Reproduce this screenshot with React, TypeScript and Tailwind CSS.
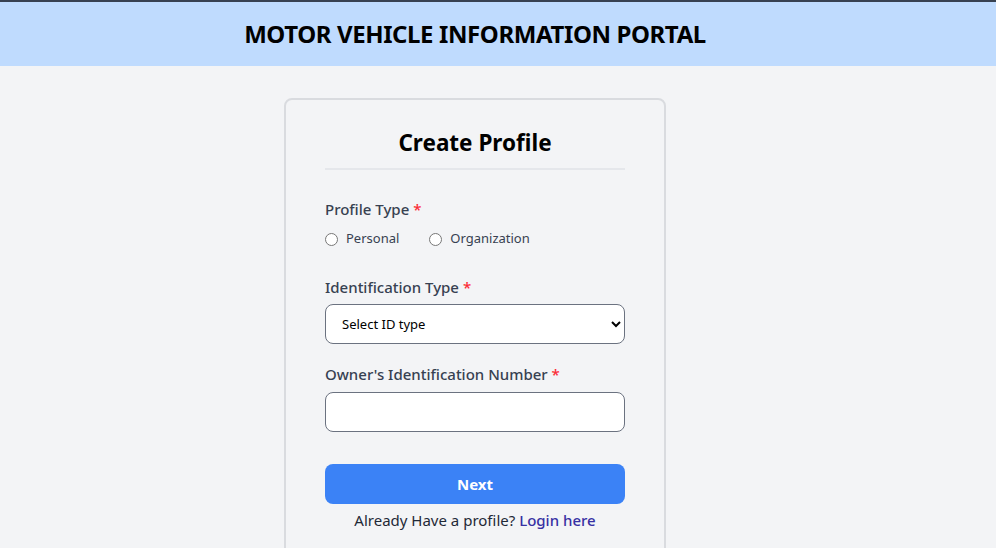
import { useState } from 'react';

export default function App() {
  const [profileType, setProfileType] = useState('');
  const [idType, setIdType] = useState('');
  const [idNumber, setIdNumber] = useState('');

  return (
    <div className="min-h-screen bg-[#f3f4f6] font-['Noto_Sans',sans-serif] text-gray-900">
      {/* Header */}
      <header className="border-t-2 border-[#374151] bg-[#bfdbfe]">
        <div className="flex h-[64px] items-center justify-center pr-[46px]">
          <h1 className="text-[24px] font-bold tracking-[-0.4px] text-black">MOTOR VEHICLE INFORMATION PORTAL</h1>
        </div>
      </header>

      <main className="flex justify-center pr-[46px] pt-[32px]">
        <div className="w-[382px] rounded-lg border-2 border-[#d9dbdf] bg-[#f3f4f6] px-[39px] pt-[26px] pb-6">
          <h2 className="text-center text-[22.5px] font-bold text-black">Create Profile</h2>
          <div className="mt-[8px] border-t-2 border-[#e5e7eb]" />

          <form className="mt-[28px]" onSubmit={(e) => e.preventDefault()}>
            {/* Profile Type */}
            <div>
              <label className="block text-[15px] font-medium text-[#374151]">
                Profile Type <span className="text-red-500">*</span>
              </label>
              <div className="mt-[9px] flex items-center gap-[30px] text-[13px] text-[#374151]">
                <label className="flex items-center gap-[8px]">
                  <input
                    type="radio"
                    name="profileType"
                    value="personal"
                    checked={profileType === 'personal'}
                    onChange={() => setProfileType('personal')}
                    className="h-[13px] w-[13px]"
                  />
                  Personal
                </label>
                <label className="flex items-center gap-[8px]">
                  <input
                    type="radio"
                    name="profileType"
                    value="organization"
                    checked={profileType === 'organization'}
                    onChange={() => setProfileType('organization')}
                    className="h-[13px] w-[13px]"
                  />
                  Organization
                </label>
              </div>
            </div>

            {/* Identification Type */}
            <div className="mt-[27px]">
              <label className="block text-[15px] font-medium text-[#374151]">
                Identification Type <span className="text-red-500">*</span>
              </label>
              <select
                value={idType}
                onChange={(e) => setIdType(e.target.value)}
                className="mt-[6px] h-[40px] w-full rounded-lg border border-[#6b7280] bg-white pl-3 pr-2 text-[13px] text-black"
              >
                <option value="">Select ID type</option>
                <option value="nin">National ID</option>
                <option value="passport">Passport</option>
                <option value="cac">CAC Number</option>
              </select>
            </div>

            {/* Identification Number */}
            <div className="mt-[19px]">
              <label className="block text-[15px] font-medium text-[#374151]">
                Owner's Identification Number <span className="text-red-500">*</span>
              </label>
              <input
                type="text"
                value={idNumber}
                onChange={(e) => setIdNumber(e.target.value)}
                className="mt-[6px] h-[40px] w-full rounded-lg border border-[#6b7280] bg-white px-3 text-[14px]"
              />
            </div>

            <button
              type="submit"
              className="mt-[32px] h-[40px] w-full rounded-lg bg-[#3b82f6] text-[15px] font-bold text-white hover:bg-blue-600"
            >
              Next
            </button>

            <p className="mt-[5px] text-center text-[15px] text-[#1f2937]">
              Already Have a profile?{' '}
              <a href="#" className="font-medium text-[#3730a3]">Login here</a>
            </p>
          </form>
        </div>
      </main>
    </div>
  );
}
